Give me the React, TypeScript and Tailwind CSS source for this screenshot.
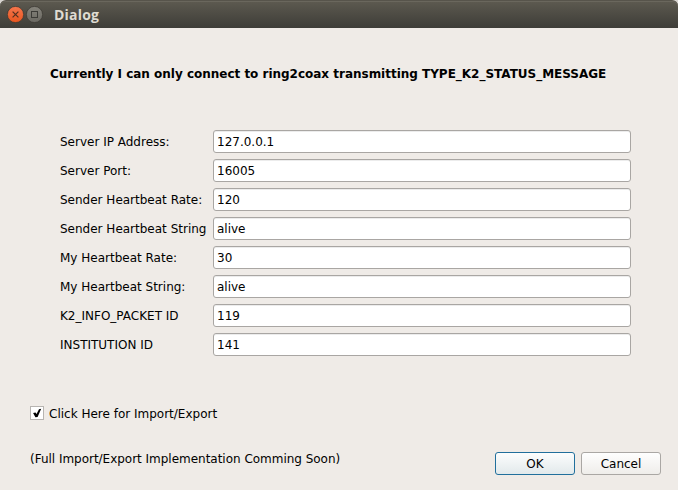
import { useState } from "react";

const FIELDS = [
  { label: "Server IP Address:", value: "127.0.0.1" },
  { label: "Server Port:", value: "16005" },
  { label: "Sender Heartbeat Rate:", value: "120" },
  { label: "Sender Heartbeat String", value: "alive" },
  { label: "My Heartbeat Rate:", value: "30" },
  { label: "My Heartbeat String:", value: "alive" },
  { label: "K2_INFO_PACKET ID", value: "119" },
  { label: "INSTITUTION ID", value: "141" },
];

function TitleBar() {
  return (
    <div className="h-7 shrink-0 bg-[#d8d5d1]">
      <header className="flex h-7 items-center rounded-t-[6px] border-t border-[#57544b] bg-linear-to-b from-[#5d5a50] to-[#3e3d38] pl-[7px] shadow-[inset_0_1px_0_#6a675d]">
        <svg width="37" height="17" viewBox="0 0 37 17" className="shrink-0" aria-hidden="true">
          <defs>
            <linearGradient id="close" x1="0" y1="0" x2="0" y2="1">
              <stop offset="0" stopColor="#f5764d" />
              <stop offset="1" stopColor="#e9561f" />
            </linearGradient>
            <linearGradient id="max" x1="0" y1="0" x2="0" y2="1">
              <stop offset="0" stopColor="#85837b" />
              <stop offset="1" stopColor="#6a6861" />
            </linearGradient>
          </defs>
          <circle cx="8.5" cy="8.5" r="8.1" fill="url(#close)" stroke="#393731" strokeWidth="0.7" />
          <path d="M5.6 5.6l5.8 5.8M11.4 5.6l-5.8 5.8" stroke="#54301f" strokeWidth="1.2" />
          <circle cx="27.5" cy="8.5" r="8.1" fill="url(#max)" stroke="#393731" strokeWidth="0.7" />
          <rect x="24.5" y="5.5" width="6" height="6" fill="none" stroke="#3c3b37" />
        </svg>
        <span className="ml-[10px] font-['Open_Sans','Noto_Sans',sans-serif] text-[14px] leading-[18px] font-bold tracking-[0.2px] text-[#dfdbd2]">
          Dialog
        </span>
      </header>
    </div>
  );
}

export default function App() {
  const [checked, setChecked] = useState(true);
  return (
    <div className="flex h-[490px] w-[678px] flex-col overflow-hidden bg-[#efebe7] font-['DejaVu_Sans',sans-serif] text-[12px] leading-[14px] text-black">
      <TitleBar />
      <main className="flex flex-1 flex-col">
        <h1 className="mt-[39px] ml-[50px] font-bold tracking-[-0.014px] whitespace-nowrap">
          Currently I can only connect to ring2coax transmitting TYPE_K2_STATUS_MESSAGE
        </h1>
        <form className="mt-[49px] mr-[47px] ml-[60px] flex flex-col gap-1.5">
          {FIELDS.map((f) => (
            <label key={f.label} className="flex h-[23px] items-center">
              <span className="w-[153px] shrink-0 whitespace-nowrap">{f.label}</span>
              <input
                defaultValue={f.value}
                className="h-[23px] min-w-0 flex-1 rounded-[3px] border border-[#a9a6a3] bg-white px-[3px] shadow-[inset_0_1px_0_#ececec] outline-none"
              />
            </label>
          ))}
        </form>
        <label className="mt-[50px] ml-[30px] flex h-[14px] items-start">
          <input
            type="checkbox"
            checked={checked}
            onChange={() => setChecked(!checked)}
            className="sr-only"
          />
          <span className="flex h-[14px] w-[14px] items-center justify-center border border-[#b7b4b1] bg-white">
            {checked && (
              <svg width="12" height="12" viewBox="0 0 12 12" aria-hidden="true">
                <path d="M2.1 6L4.5 5.4L5.5 7.1L8 2.2L10.2 1.8L6.6 10L4.4 10.3Z" fill="#000" />
              </svg>
            )}
          </span>
          <span className="mt-px ml-[5px]">Click Here for Import/Export</span>
        </label>
        <footer className="mt-8 mr-[17px] ml-[30px] flex h-[23px] justify-between">
          <p className="tracking-[-0.02px] whitespace-nowrap">(Full Import/Export Implementation Comming Soon)</p>
          <div className="flex gap-1.5">
            <button className="h-[23px] w-20 rounded-[3px] border border-[#216f9c] bg-linear-to-b from-[#fcfdfd] to-[#e2e9eb]">
              OK
            </button>
            <button className="h-[23px] w-20 rounded-[3px] border border-[#aaa7a4] bg-linear-to-b from-[#fefefe] to-[#efedea]">
              Cancel
            </button>
          </div>
        </footer>
      </main>
    </div>
  );
}
